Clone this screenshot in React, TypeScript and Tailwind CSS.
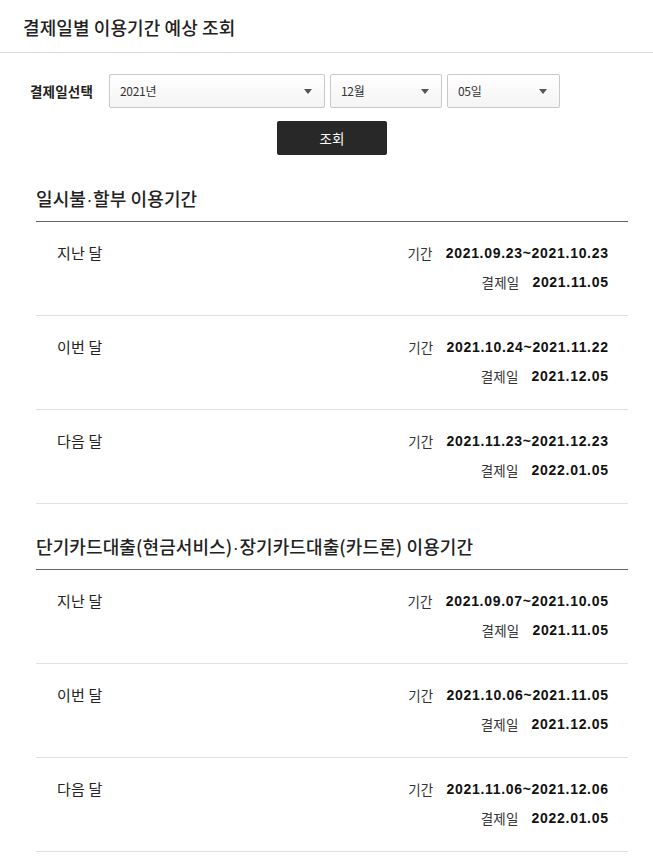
import React from "react";

const KR = "font-['Noto_Sans_CJK_KR','Noto_Sans',sans-serif]";
const NUM = "font-['Liberation_Sans',Arial,sans-serif]";

type Row = { label: string; period: string; pay: string };

const sections: { title: [string, string]; rows: Row[] }[] = [
  {
    title: ["일시불", "할부 이용기간"],
    rows: [
      { label: "지난 달", period: "2021.09.23~2021.10.23", pay: "2021.11.05" },
      { label: "이번 달", period: "2021.10.24~2021.11.22", pay: "2021.12.05" },
      { label: "다음 달", period: "2021.11.23~2021.12.23", pay: "2022.01.05" },
    ],
  },
  {
    title: ["단기카드대출(현금서비스)", "장기카드대출(카드론) 이용기간"],
    rows: [
      { label: "지난 달", period: "2021.09.07~2021.10.05", pay: "2021.11.05" },
      { label: "이번 달", period: "2021.10.06~2021.11.05", pay: "2021.12.05" },
      { label: "다음 달", period: "2021.11.06~2021.12.06", pay: "2022.01.05" },
    ],
  },
];

function Select({ text, width }: { text: string; width: string }) {
  return (
    <div
      className={`${width} h-[34px] flex items-center justify-between pl-[10px] pr-[12px] border border-[#c9c9c9] rounded-[2px] bg-gradient-to-b from-white to-[#f4f4f4]`}
    >
      <span className={`${KR} text-[12px] text-[#333] tracking-[-0.3px]`}>{text}</span>
      <svg width="8" height="5" viewBox="0 0 8 5">
        <path d="M0 0H8L4 5Z" fill="#555" />
      </svg>
    </div>
  );
}

export default function App() {
  return (
    <div className={`${KR} bg-white w-[653px] min-h-[862px] text-[#222]`}>
      <div className="h-[53px] border-b border-[#dcdcdc] flex items-center pl-[23px]">
        <h1 className="text-[18px] font-medium text-[#222] tracking-[0.1px] leading-none pt-[1px]">
          결제일별 이용기간 예상 조회
        </h1>
      </div>

      <div className="flex items-center pl-[30px] pt-[21px]">
        <span className="text-[13.5px] font-bold text-[#222] w-[79px] tracking-[0.2px]">결제일선택</span>
        <div className="flex gap-[5px]">
          <Select text="2021년" width="w-[216px]" />
          <Select text="12월" width="w-[112px]" />
          <Select text="05일" width="w-[113px]" />
        </div>
      </div>

      <div className="ml-[36px] mr-[25px]">
        <div className="flex justify-center pt-[13px]">
          <button className="w-[110px] h-[34px] bg-[#282828] rounded-[2px] text-white text-[13.5px]">
            조회
          </button>
        </div>

        {sections.map((s, si) => (
          <div key={si} className={si === 0 ? "mt-[31px]" : "mt-[30px]"}>
            <h2 className="h-[36px] overflow-hidden text-[18px] font-medium leading-[24px] pb-[11px] border-b border-[#666] tracking-[0.1px] whitespace-nowrap">
              {s.title[0]}
              <span className={`${NUM} font-normal px-[0.5px] leading-none`}>·</span>
              {s.title[1]}
            </h2>
            {s.rows.map((r, ri) => (
              <div
                key={ri}
                className="flex justify-between pl-[21px] pr-[20px] pt-[21px] pb-[23px] border-b border-[#e0e0e0]"
              >
                <div className="text-[15px] leading-[20px] text-[#222] tracking-[0.2px]">{r.label}</div>
                <div className="flex flex-col items-end gap-[9px]">
                  <div className="flex items-center h-[20px]">
                    <span className="text-[13.5px] leading-[20px] text-[#333] tracking-[0.2px]">기간</span>
                    <span className={`${NUM} ml-[13px] text-[14px] leading-[20px] font-bold tracking-[0.7px] mr-[-0.7px] text-[#111]`}>
                      {r.period}
                    </span>
                  </div>
                  <div className="flex items-center h-[20px]">
                    <span className="text-[13.5px] leading-[20px] text-[#333] tracking-[0.2px]">결제일</span>
                    <span className={`${NUM} ml-[13px] text-[14px] leading-[20px] font-bold tracking-[0.7px] mr-[-0.7px] text-[#111]`}>
                      {r.pay}
                    </span>
                  </div>
                </div>
              </div>
            ))}
          </div>
        ))}
      </div>
    </div>
  );
}
